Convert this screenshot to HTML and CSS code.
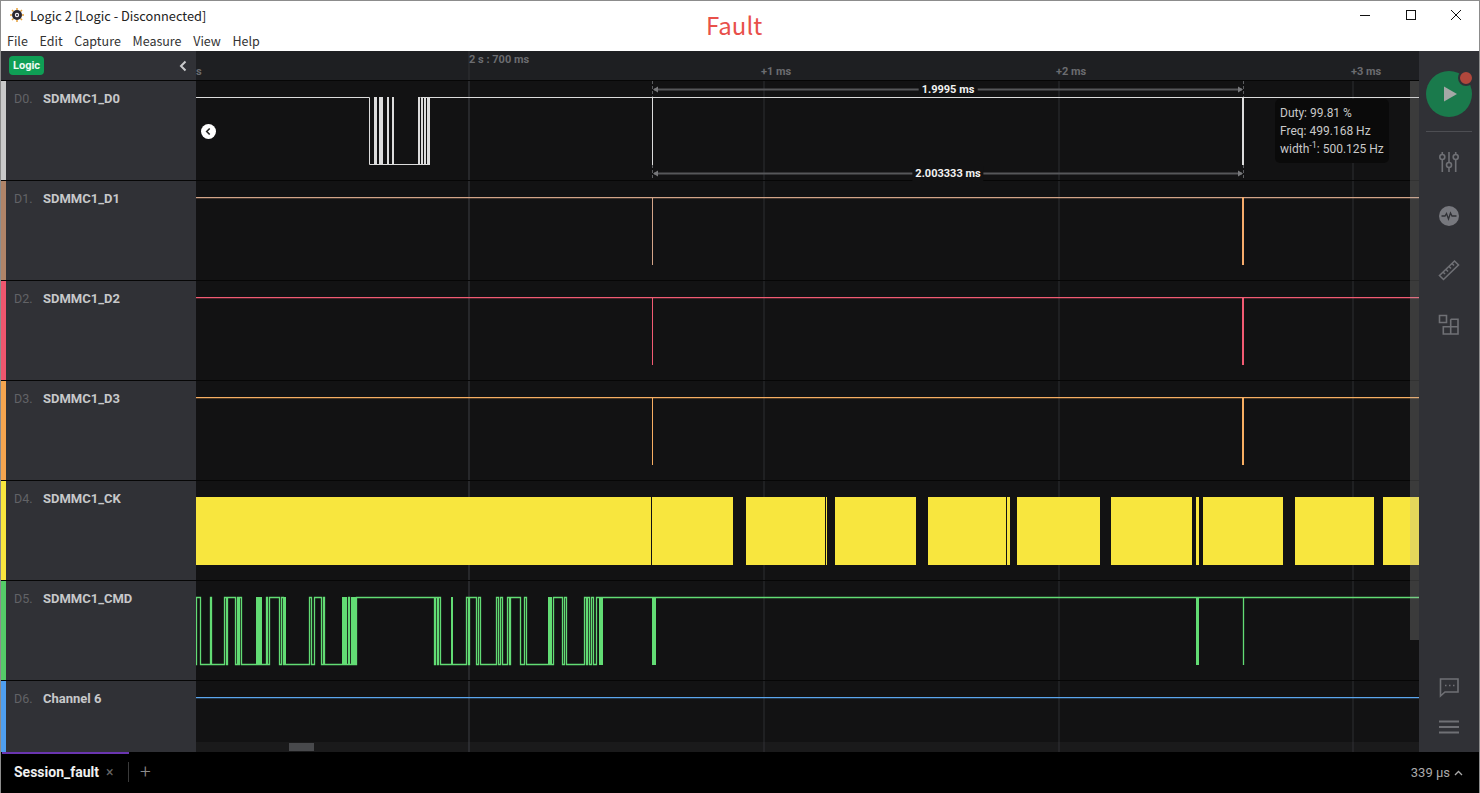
FILE: index.html
```html
<!DOCTYPE html>
<html lang="en">

<head>
    <meta charset="UTF-8">
    <title>Logic 2 [Logic - Disconnected]</title>
    <link rel="stylesheet" href="styles.css">
</head>

<body>
    <div class="window">
        <!-- Title bar -->
        <header class="titlebar">
            <div class="title-row">
                <svg class="app-logo" width="14" height="14" viewBox="0 0 14 14">
                    <path d="M7 0v2M7 12v2M0 7h2M12 7h2M2 2l1.500 1.500M10.500 10.500L12 12M12 2l-1.500 1.500M3.500 10.500L2 12" stroke="#e8a33c" stroke-width="1.500"/>
                    <circle cx="7" cy="7" r="5" fill="#2b2730"/>
                    <circle cx="7" cy="7" r="2.200" fill="#f1eef5"/>
                    <circle cx="7" cy="7" r="1" fill="#2b2730"/>
                </svg>
                <span class="app-title">Logic 2 [Logic - Disconnected]</span>
            </div>
            <nav class="menu">
                <span>File</span>
                <span>Edit</span>
                <span>Capture</span>
                <span>Measure</span>
                <span>View</span>
                <span>Help</span>
            </nav>
            <div class="fault-note">Fault</div>
            <div class="window-controls">
                <svg width="12" height="12" viewBox="0 0 12 12"><path d="M1 6.500h10" stroke="#111"/></svg>
                <svg width="12" height="12" viewBox="0 0 12 12"><rect x="1.500" y="1.500" width="9" height="9" fill="none" stroke="#111"/></svg>
                <svg width="12" height="12" viewBox="0 0 12 12"><path d="M1 1l10 10M11 1L1 11" stroke="#111"/></svg>
            </div>
        </header>

        <div class="workspace">
            <main class="plot">
                <!-- Ruler -->
                <div class="ruler-row">
                    <div class="ruler-side">
                        <span class="badge">Logic</span>
                        <svg width="10" height="12" viewBox="0 0 10 12"><path d="M7.500 1.500L3 6l4.500 4.500" fill="none" stroke="#c9cacc" stroke-width="2"/></svg>
                    </div>
                    <div class="ruler">
                        <span class="tick tick-s">s</span>
                        <span class="tick tick-major">2 s : 700 ms</span>
                        <span class="tick tick-1">+1 ms</span>
                        <span class="tick tick-2">+2 ms</span>
                        <span class="tick tick-3">+3 ms</span>
                    </div>
                </div>

                <!-- D0 -->
                <div class="row ch0">
                    <div class="label"><span class="num">D0.</span><span class="name">SDMMC1_D0</span></div>
                    <div class="track">
                        <svg class="wave" width="1223" height="100" viewBox="196 0 1223 100">
                            <path class="line" d="M196 16.500H369.500V83.500H430M420.500 16.500H1419"/>
                            <path class="fill" d="M374 16h3v68h-3zM379 16h4v68h-4zM387 16h2v68h-2zM392 16h2v68h-2zM418 16h2v68h-2zM421 16h2v68h-2zM424 16h2v68h-2zM427 16h3v68h-3z"/>
                            <path class="line" d="M652.500 16V84"/>
                            <path class="fill" d="M1242 16h2v68h-2z"/>
                            <g class="ruler-mark">
                                <path class="dash" d="M652.500 0V16M1243.500 0V16M652.500 84V99M1243.500 84V99"/>
                                <path class="span" d="M654 8.500H1242M654 92.500H1242"/>
                                <path class="head" d="M653 8.500l5-3v6zM1243 8.500l-5-3v6zM653 92.500l5-3v6zM1243 92.500l-5-3v6z"/>
                            </g>
                        </svg>
                        <div class="measure measure-top">1.9995 ms</div>
                        <div class="measure measure-bottom">2.003333 ms</div>
                        <div class="tip">
                            <div>Duty: 99.81 %</div>
                            <div>Freq: 499.168 Hz</div>
                            <div>width<sup>-1</sup>: 500.125 Hz</div>
                        </div>
                        <div class="nav-dot">
                            <svg width="15" height="15" viewBox="0 0 15 15"><path d="M8.700 4.500L5.700 7.500l3 3" fill="none" stroke="#222" stroke-width="1.600"/></svg>
                        </div>
                    </div>
                </div>

                <!-- D1 -->
                <div class="row ch1">
                    <div class="label"><span class="num">D1.</span><span class="name">SDMMC1_D1</span></div>
                    <div class="track">
                        <svg class="wave" width="1223" height="100" viewBox="196 0 1223 100">
                            <path class="level" d="M196 16.650H1419"/>
                            <path class="line" d="M652.500 16V84"/>
                            <path class="fill spike" d="M1242 16h2v68h-2z"/>
                        </svg>
                    </div>
                </div>

                <!-- D2 -->
                <div class="row ch2">
                    <div class="label"><span class="num">D2.</span><span class="name">SDMMC1_D2</span></div>
                    <div class="track">
                        <svg class="wave" width="1223" height="100" viewBox="196 0 1223 100">
                            <path class="level" d="M196 16.650H1419"/>
                            <path class="line" d="M652.500 16V84"/>
                            <path class="fill" d="M1242 16h2v68h-2z"/>
                        </svg>
                    </div>
                </div>

                <!-- D3 -->
                <div class="row ch3">
                    <div class="label"><span class="num">D3.</span><span class="name">SDMMC1_D3</span></div>
                    <div class="track">
                        <svg class="wave" width="1223" height="100" viewBox="196 0 1223 100">
                            <path class="level" d="M196 16.650H1419"/>
                            <path class="line" d="M652.500 16V84"/>
                            <path class="fill" d="M1242 16h2v68h-2z"/>
                        </svg>
                    </div>
                </div>

                <!-- D4 clock, too dense to show each edge -->
                <div class="row ch4">
                    <div class="label"><span class="num">D4.</span><span class="name">SDMMC1_CK</span></div>
                    <div class="track">
                        <svg class="wave" width="1223" height="100" viewBox="196 0 1223 100">
                            <path class="fill" d="M196 16H651V84H196zM652 16H733V84H652zM746 16H825V84H746zM826 16H827V84H826zM835 16H916V84H835zM928 16H1006V84H928zM1007 16H1010V84H1007zM1017 16H1100V84H1017zM1111 16H1192V84H1111zM1196 16H1199V84H1196zM1203 16H1283V84H1203zM1295 16H1374V84H1295zM1383 16H1419V84H1383z"/>
                        </svg>
                    </div>
                </div>

                <!-- D5 -->
                <div class="row ch5">
                    <div class="label"><span class="num">D5.</span><span class="name">SDMMC1_CMD</span></div>
                    <div class="track">
                        <svg class="wave" width="1223" height="100" viewBox="196 0 1223 100">
                            <path class="level" d="M196 83.500H196.500V16.500H200.500V83.500H210.500V16.500H211.500V83.500H224.500V16.500H226.500V83.500H227.500V16.500H235.500V83.500H237.500V16.500H238.500V83.500H239.500V16.500H241.500V83.500H266.500V16.500H267.500V83.500H269.500V16.500H279.500V83.500H281.500V16.500H283.500V83.500H309.500V16.500H311.500V83.500H314.500V16.500H321.500V83.500H323.500V16.500H324.500V83.500H348.500V16.500H349.500V83.500H356.500V16.500H434.500V83.500H435.500V16.500H437.500V83.500H438.500V16.500H440.500V83.500H466.500V16.500H468.500V83.500H469.500V16.500H476.500V83.500H478.500V16.500H480.500V83.500H496.500V16.500H498.500V83.500H500.500V16.500H502.500V83.500H507.500V16.500H509.500V83.500H510.500V16.500H520.500V83.500H524.500V16.500H526.500V83.500H553.500V16.500H562.500V83.500H564.500V16.500H566.500V83.500H584.500V16.500H586.500V83.500H587.500V16.500H589.500V83.500H591.500V16.500H593.500V83.500H596.500V16.500H1419M1243.500 16V84"/>
                            <path class="fill" d="M210 16h2v68h-2zM256 16h6v68h-6zM283 16h3v68h-3zM342 16h5v68h-5zM351 16h5v68h-5zM451 16h2v68h-2zM548 16h4v68h-4zM599 16h4v68h-4zM652 16h4v68h-4zM1196 16h3v68h-3z"/>
                        </svg>
                    </div>
                </div>

                <!-- D6 -->
                <div class="row row-last ch6">
                    <div class="label"><span class="num">D6.</span><span class="name">Channel 6</span></div>
                    <div class="track">
                        <svg class="wave" width="1223" height="71" viewBox="196 0 1223 71">
                            <path class="level" d="M196 16.650H1419"/>
                        </svg>
                        <div class="hscroll"><div class="hscroll-thumb"></div></div>
                    </div>
                </div>

                <div class="vscroll"></div>
            </main>

            <!-- Right rail -->
            <aside class="rail">
                <div class="play">
                    <svg width="46" height="46" viewBox="0 0 46 46"><path d="M18 15.500L31 23 18 30.500z" fill="#a4a8a6"/></svg>
                    <span class="rec-dot"></span>
                </div>
                <div class="rail-sep"></div>
                <svg class="rail-icon" width="24" height="24" viewBox="0 0 24 24">
                    <path d="M5.300 2v2.500M5.300 9.500V22M12 2v10.500M12 17.500V22M18.700 2v2.500M18.700 9.500V22"/>
                    <circle cx="5.300" cy="7" r="2.500"/>
                    <circle cx="12" cy="15" r="2.500"/>
                    <circle cx="18.700" cy="7" r="2.500"/>
                </svg>
                <svg class="rail-icon" width="24" height="24" viewBox="0 0 24 24">
                    <circle class="solid" cx="12" cy="12" r="10"/>
                    <path class="pulse" d="M4.500 12H8l1.500-2.500 2 5.500 2-6 1.500 3h4.500"/>
                </svg>
                <svg class="rail-icon" width="24" height="24" viewBox="0 0 24 24">
                    <path d="M2.500 17.500L17.500 3l4 4L6.500 21.500zM6 14l2 2M9 11.500l2 2M12 8.500l2 2M15 5.500l2 2"/>
                </svg>
                <svg class="rail-icon" width="24" height="24" viewBox="0 0 24 24">
                    <path d="M2.500 3.500h7v7h-7zM13.700 7.300H21V22H6.300V14.700H21M13.700 7.300V22"/>
                </svg>
                <svg class="rail-icon rail-bottom" width="24" height="24" viewBox="0 0 24 24">
                    <path d="M3.500 4h17.500v13H8l-4.500 4z"/>
                    <path class="dots" d="M8 10.500h1.500M12 10.500h1.500M16 10.500h1.500"/>
                </svg>
                <svg class="rail-icon" width="24" height="24" viewBox="0 0 24 24">
                    <path class="bars" d="M2 6.500h20M2 12h20M2 17.500h20"/>
                </svg>
            </aside>
        </div>

        <!-- Session tabs -->
        <footer class="tabbar">
            <div class="tab">
                <span class="tab-name">Session_fault</span>
                <span class="tab-close">×</span>
            </div>
            <span class="tab-add">+</span>
            <span class="buffer">339 μs
                <svg width="9" height="6" viewBox="0 0 9 6"><path d="M1 5l3.500-3.500L8 5" fill="none" stroke="#aaa" stroke-width="1.300"/></svg>
            </span>
        </footer>
    </div>
</body>

</html>
```

FILE: styles.css
```css
/* General styles */
body {
    margin: 0;
    background: #000;
    font-family: Roboto, Arial, sans-serif;
    overflow: hidden;
}

.window {
    height: 100vh;
    box-sizing: border-box;
    border-left: 1px solid #8c8c8c;
    border-right: 1px solid #8c8c8c;
    display: flex;
    flex-direction: column;
}

/* Title bar */
.titlebar {
    position: relative;
    height: 51px;
    box-sizing: border-box;
    border-top: 1px solid #8c8c8c;
    background: #fff;
    color: #222;
    font-family: "Noto Sans CJK SC", "Noto Sans", sans-serif;
    font-size: 12.8px;
}

.title-row {
    display: flex;
    align-items: center;
    height: 28px;
    padding-left: 9px;
}

.app-logo {
    margin-right: 6px;
}

.menu {
    display: flex;
    gap: 11.700px;
    margin-top: 2px;
    padding-left: 6px;
    font-size: 12.5px;
    line-height: 20px;
    color: #333;
}

.fault-note {
    position: absolute;
    left: 705px;
    top: 6px;
    color: #e8504a;
    font-size: 24px;
    line-height: 36px;
}

.window-controls {
    position: absolute;
    right: 17px;
    top: 8px;
    display: flex;
    gap: 33.500px;
}

/* Main area */
.workspace {
    flex: 1;
    display: flex;
    min-height: 0;
}

.plot {
    position: relative;
    width: 1418px;
    display: flex;
    flex-direction: column;
}

.ruler-row {
    display: flex;
    height: 30px;
    box-sizing: border-box;
    border-bottom: 1px solid #060606;
}

.ruler-side {
    width: 195px;
    box-sizing: border-box;
    padding: 0 8px;
    background: #303136;
    display: flex;
    align-items: center;
    justify-content: space-between;
}

.badge {
    background: #0f9f55;
    color: #eefaf2;
    border-radius: 4px;
    padding: 0 4px;
    font-size: 11px;
    font-weight: 700;
    line-height: 19px;
}

.ruler {
    position: relative;
    flex: 1;
    background: #1e1f22 linear-gradient(#27282b, #27282b) 272px 0 / 2px 100% no-repeat;
}

.tick {
    position: absolute;
    top: 14px;
    color: #6b6c70;
    font-size: 11px;
    font-weight: 700;
}

.tick-s { left: 0; }
.tick-major { left: 273px; top: 2px; }
.tick-1 { left: 565px; }
.tick-2 { left: 860px; }
.tick-3 { left: 1155px; }

/* Channel rows */
.row {
    display: flex;
    height: 100px;
    box-sizing: border-box;
    border-bottom: 1px solid #060606;
}

.row-last {
    height: 71px;
    border-bottom: 0;
}

.ch0 { --c: #dcdcdc; --strip: #c9c9c9; }
.ch1 { --c: #d3a488; --strip: #b08468; }
.ch2 { --c: #f25b73; --strip: #ee566e; }
.ch3 { --c: #f7ae62; --strip: #f5a54f; }
.ch4 { --c: #f8e63e; --strip: #f8e63e; }
.ch5 { --c: #62dc74; --strip: #55cc68; }
.ch6 { --c: #5ba6ee; --strip: #4f9ff0; }

.label {
    width: 195px;
    box-sizing: border-box;
    padding: 10px 0 0 8px;
    background: #303136;
    border-left: 5px solid var(--strip);
    display: flex;
    line-height: 15px;
    font-size: 13px;
}

.num {
    width: 29px;
    font-size: 12.5px;
    color: #626367;
}

.name {
    color: #c7c8ca;
    font-weight: 700;
}

.track {
    position: relative;
    flex: 1;
    background-color: #121213;
    background-image:
        linear-gradient(#27282b, #27282b),
        linear-gradient(#1f2022, #1f2022),
        linear-gradient(#1f2022, #1f2022),
        linear-gradient(#1f2022, #1f2022);
    background-position: 272px 0, 567px 0, 862px 0, 1156px 0;
    background-size: 2px 100%;
    background-repeat: no-repeat;
}

.wave {
    display: block;
}

.line {
    fill: none;
    stroke: var(--c);
    stroke-width: 1;
}

/* colored traces, a touch heavier so the colour holds */
.level {
    fill: none;
    stroke: var(--c);
    stroke-width: 1.300;
}

.fill {
    fill: var(--c);
}

.spike {
    fill: #f5ab6b;
}

.ruler-mark .dash {
    fill: none;
    stroke: #5c5d60;
    stroke-dasharray: 3 2;
}

.ruler-mark .span {
    fill: none;
    stroke: #56575a;
    stroke-width: 2;
}

.ruler-mark .head {
    fill: #77787b;
}

/* Things lying over the waveform */
.measure {
    position: absolute;
    left: 752px;
    transform: translateX(-50%);
    padding: 0 3px;
    background: #121213;
    color: #f2f2f2;
    font-size: 11px;
    font-weight: 700;
    line-height: 15px;
    white-space: nowrap;
}

.measure-top { top: 1px; }
.measure-bottom { top: 85px; }

.tip {
    position: absolute;
    left: 1079px;
    top: 18px;
    width: 114px;
    height: 64px;
    box-sizing: border-box;
    padding: 5px;
    background: #0a0a0a;
    border-radius: 5px;
    color: #c9c9c9;
    font-size: 12px;
    line-height: 18px;
    white-space: nowrap;
}

.tip sup {
    font-size: 9px;
    line-height: 0;
}

.nav-dot {
    position: absolute;
    left: 5px;
    top: 43px;
    width: 15px;
    height: 15px;
    background: #fff;
    border-radius: 50%;
}

.nav-dot svg {
    display: block;
}

.hscroll {
    position: absolute;
    left: 0;
    right: 0;
    bottom: 0;
    height: 10px;
    background: rgba(70, 70, 72, 0.16);
}

.hscroll-thumb {
    position: absolute;
    left: 93px;
    top: 1px;
    width: 25px;
    height: 8px;
    background: #48494c;
}

.vscroll {
    position: absolute;
    right: 0;
    top: 30px;
    width: 9px;
    height: 559px;
    background: rgba(173, 173, 173, 0.266);
}

/* Right rail */
.rail {
    flex: 1;
    background: #303136;
    display: flex;
    flex-direction: column;
    align-items: center;
    padding: 20px 0 13px;
    box-sizing: border-box;
}

.play {
    position: relative;
    width: 46px;
    height: 46px;
    background: #1a7a4c;
    border-radius: 50%;
}

.play svg {
    display: block;
}

.rec-dot {
    position: absolute;
    right: -2px;
    top: -1px;
    width: 12px;
    height: 12px;
    background: #b0473c;
    border: 2px solid #303136;
    border-radius: 50%;
}

.rail-sep {
    width: 46px;
    height: 1px;
    margin: 14px 0 18px;
    background: #4d4e53;
}

.rail-icon {
    margin-bottom: 30px;
    fill: none;
    stroke: #6f7075;
    stroke-width: 1.6;
}

.rail-icon:last-child {
    margin-bottom: 0;
}

.rail-bottom {
    margin-top: auto;
    margin-bottom: 16px;
}

.rail-icon .solid {
    fill: #77787e;
    stroke: none;
}

.rail-icon .pulse {
    stroke: #303136;
    stroke-width: 1.3;
}

.rail-icon .bars {
    stroke-width: 2.2;
}

/* Tabs */
.tabbar {
    height: 41px;
    display: flex;
    align-items: center;
    background: #000;
    color: #aaa;
}

.tab {
    position: relative;
    width: 127px;
    height: 100%;
    box-sizing: border-box;
    padding: 0 0 4px 12px;
    margin-left: 1px;
    display: flex;
    align-items: center;
    border-top: 2px solid #6a35b0;
}

.tab::after {
    content: "";
    position: absolute;
    right: 0;
    top: 8px;
    height: 20px;
    width: 1px;
    background: #3a3a3a;
}

.tab-name {
    color: #f0f0f0;
    font-size: 14px;
    font-weight: 700;
}

.tab-close {
    margin-left: 7px;
    color: #666;
    font-size: 14px;
}

.tab-add {
    margin: 0 0 3px 11px;
    color: #8c8c8c;
    font-size: 19px;
    font-weight: 300;
}

.buffer {
    margin-left: auto;
    padding-right: 16px;
    font-size: 13px;
    display: flex;
    align-items: center;
    gap: 4px;
}
```
